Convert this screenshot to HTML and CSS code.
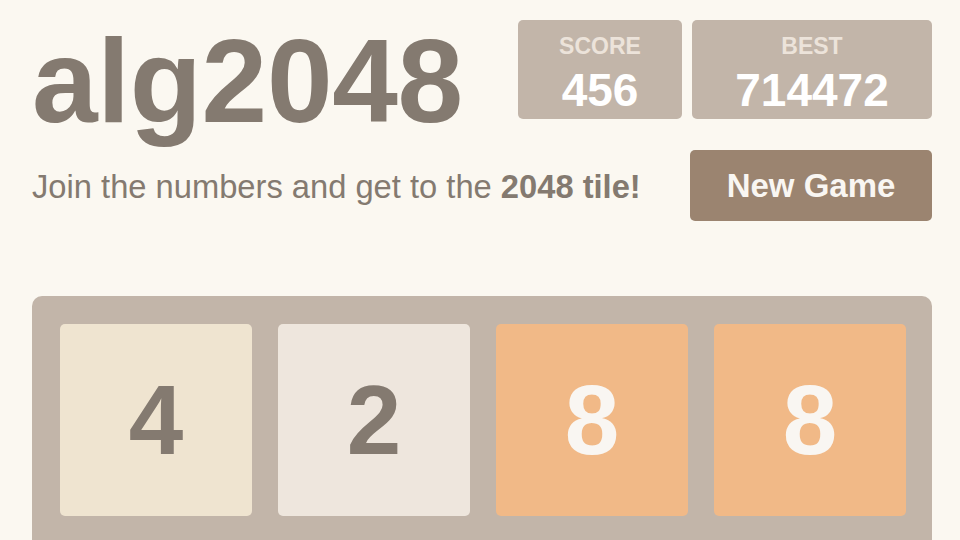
FILE: index.html
```html
<!DOCTYPE html>
<html lang="en">
<head>
<meta charset="utf-8">
<title>alg2048</title>
<link rel="stylesheet" href="styles.css">
</head>
<body>
<div class="container">
  <div class="heading">
    <h1 class="title">alg2048</h1>
    <div class="scores">
      <div class="score-box score">
        <div class="score-label">SCORE</div>
        <div class="score-value">456</div>
      </div>
      <div class="score-box best">
        <div class="score-label">BEST</div>
        <div class="score-value">714472</div>
      </div>
    </div>
  </div>
  <div class="above-game">
    <p class="intro">Join the numbers and get to the <strong>2048 tile!</strong></p>
    <a class="restart-button">New Game</a>
  </div>
  <div class="game-container">
    <div class="grid-row">
      <div class="tile tile-4">4</div>
      <div class="tile tile-2">2</div>
      <div class="tile tile-8">8</div>
      <div class="tile tile-8">8</div>
    </div>
    <div class="grid-row">
      <div class="tile tile-empty"></div>
      <div class="tile tile-empty"></div>
      <div class="tile tile-empty"></div>
      <div class="tile tile-empty"></div>
    </div>
  </div>
</div>
</body>
</html>
```
FILE: styles.css
```css
html, body {
  margin: 0;
  padding: 0;
  background: #fbf8f1;
  color: #847a70;
  font-family: "Liberation Sans", Arial, sans-serif;
  overflow: hidden;
}

.container {
  width: 900px;
  margin-left: 32px;
  padding-top: 20px;
}

.heading {
  display: flex;
  justify-content: space-between;
  align-items: flex-start;
}

.title {
  margin: 3px 0 0 0;
  font-size: 118px;
  line-height: 117px;
  font-weight: bold;
  color: #847a70;
  letter-spacing: -0.3px;
}

.scores {
  display: flex;
  gap: 10px;
}

.score-box {
  box-sizing: border-box;
  height: 99px;
  background: #c2b5a9;
  border-radius: 5px;
  padding-top: 15px;
  text-align: center;
}

.score { width: 164px; }
.best { width: 240px; }

.score-label {
  font-size: 23px;
  line-height: 23px;
  font-weight: bold;
  color: #ece3da;
}

.score-value {
  margin-top: 8px;
  font-size: 46px;
  line-height: 48px;
  font-weight: bold;
  color: #ffffff;
}

.above-game {
  display: flex;
  justify-content: space-between;
  align-items: flex-start;
  margin-top: 10px;
}

.intro {
  margin: 0;
  padding-top: 1px;
  font-size: 32.7px;
  line-height: 71px;
  color: #847a70;
}

.intro strong {
  font-weight: bold;
}

.restart-button {
  display: block;
  width: 242px;
  height: 71px;
  box-sizing: border-box;
  background: #9b8470;
  border-radius: 5px;
  color: #f9f6f2;
  font-size: 33px;
  line-height: 71px;
  font-weight: bold;
  text-align: center;
}

.game-container {
  margin-top: 74px;
  background: #c2b5a9;
  border-radius: 10px;
  padding: 28px 26px 26px 28px;
  display: flex;
  flex-direction: column;
  gap: 26px;
}

.grid-row {
  display: flex;
  gap: 26px;
}

.tile {
  width: 192px;
  height: 192px;
  border-radius: 5px;
  display: flex;
  align-items: center;
  justify-content: center;
  font-size: 98px;
  font-weight: bold;
  line-height: 1;
}

.tile-empty { background: #cdc1b5; }
.tile-2 { background: #eee6dd; color: #847a70; }
.tile-4 { background: #efe4d0; color: #847a70; }
.tile-8 { background: #f1b987; color: #f9f6f2; }
```
